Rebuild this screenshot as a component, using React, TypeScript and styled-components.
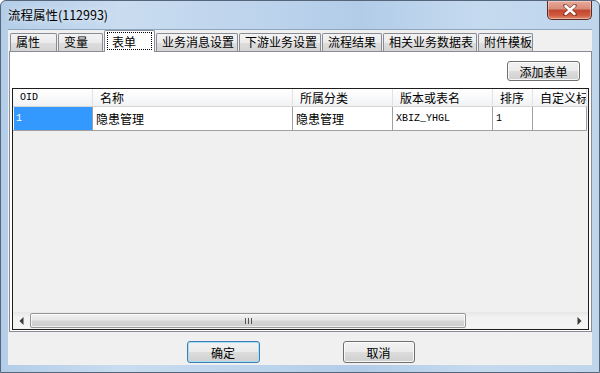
import React from 'react';
import styled, { createGlobalStyle } from 'styled-components';

const Global = createGlobalStyle`
  html, body { margin: 0; padding: 0; }
  body {
    width: 600px; height: 373px; overflow: hidden;
    font-family: "Noto Sans CJK SC", "Liberation Sans", sans-serif;
    font-size: 12px; color: #000;
  }
`;

const Window = styled.div`
  width: 600px; height: 373px; box-sizing: border-box;
  border: 1px solid #55657a;
  border-radius: 6px 6px 0 0;
  background: linear-gradient(90deg, #b3cde8 0%, #c9dcf0 20%, #bcd3ec 45%, #b2cce8 60%, #c5daef 80%, #bed5ec 100%);
  padding: 0 7px 7px 7px;
  display: flex; flex-direction: column;
  overflow: hidden;
`;

const TitleBar = styled.div`
  height: 28px; flex: none;
  display: flex; align-items: flex-start; justify-content: space-between;
`;

const TitleText = styled.div`
  height: 28px; line-height: 28px; font-size: 12.5px; color: #000;
  text-shadow: 0 0 6px rgba(255,255,255,0.9);
`;

const CloseBtn = styled.div`
  width: 45px; height: 19px; box-sizing: border-box;
  border: 1px solid #5b2a22; border-top: none;
  border-radius: 0 0 5px 5px;
  background: linear-gradient(#e9a99a 0%, #d78a78 45%, #c2452f 50%, #cf5b3f 80%, #e08f72 100%);
  box-shadow: inset 0 0 0 1px rgba(255,255,255,0.35);
  display: flex; align-items: center; justify-content: center;
`;

const Client = styled.div`
  flex: 1; background: #f0f0f0;
  display: flex; flex-direction: column;
  padding-left: 1px;
  border-top: 1px solid #8fa6bf;
`;

const TabStrip = styled.div`
  height: 21px; flex: none;
  display: flex; align-items: flex-end;
  padding-left: 1px;
  position: relative; z-index: 1;
`;

const Tab = styled.div<{ $w: number; $active?: boolean }>`
  width: ${p => p.$w}px; box-sizing: border-box;
  height: ${p => (p.$active ? 22 : 18)}px;
  margin-right: 1px;
  margin-bottom: ${p => (p.$active ? -1 : 0)}px;
  border: 1px solid #898c95; border-bottom: none;
  border-radius: 2px 2px 0 0;
  background: ${p => (p.$active ? '#ffffff' : 'linear-gradient(#f3f3f3 0%, #ebebeb 50%, #dedede 51%, #d4d4d4 100%)')};
  padding: ${p => (p.$active ? '1px 2px 2px 2px' : '0 0 0 5px')};
  line-height: 16px; white-space: nowrap; overflow: hidden;
`;

const FocusBox = styled.div`
  height: 100%; box-sizing: border-box;
  border: 1px dotted #000;
  padding-left: 4px; line-height: 17px;
`;

const Panel = styled.div`
  height: 281px; box-sizing: border-box; flex: none;
  border: 1px solid #898c95;
  background: #fff;
  display: flex; flex-direction: column;
  padding: 9px 2px 1px 2px;
`;

const ToolRow = styled.div`
  display: flex; justify-content: flex-end;
  padding-right: 9px; margin-bottom: 7px;
`;

const Button = styled.div<{ $w: number; $h?: number; $default?: boolean }>`
  width: ${p => p.$w}px; height: ${p => p.$h ?? 20}px; box-sizing: border-box;
  border: 1px solid ${p => (p.$default ? '#3c7fb1' : '#707070')};
  border-radius: 3px;
  background: linear-gradient(#f2f2f2 0%, #ebebeb 49%, #dddddd 50%, #cfcfcf 100%);
  box-shadow: inset 0 0 0 1px ${p => (p.$default ? '#a9dcf7' : 'rgba(255,255,255,0.8)')};
  display: flex; align-items: center; justify-content: center;
  font-size: 12px;
`;

const ListView = styled.div`
  flex: 1; box-sizing: border-box;
  border: 1px solid #1e1e1e;
  background: #f0f0f0;
  display: flex; flex-direction: column;
  overflow: hidden;
`;

const HeaderRow = styled.div`
  height: 17px; flex: none; display: flex;
  background: linear-gradient(#ffffff 0%, #f7f8fa 60%, #f1f2f4 100%);
  border-bottom: 1px solid #d5d5d5;
`;

const HeaderCell = styled.div<{ $w: number; $mono?: boolean }>`
  width: ${p => p.$w}px; flex: none; box-sizing: border-box;
  border-right: 1px solid #e3e3e3;
  padding-left: 7px; line-height: 17px; white-space: nowrap; overflow: hidden;
  font-family: ${p => (p.$mono ? '"Liberation Mono", monospace' : 'inherit')};
  font-size: ${p => (p.$mono ? '10px' : '12px')};
`;

const DataRow = styled.div`
  height: 24px; flex: none; display: flex;
`;

const DataCell = styled.div<{ $w: number; $mono?: boolean; $sel?: boolean }>`
  width: ${p => p.$w}px; flex: none; box-sizing: border-box;
  border-right: 1px solid #a0a0a0; border-bottom: 1px solid #a0a0a0;
  background: ${p => (p.$sel ? '#3399ff' : '#fff')};
  color: ${p => (p.$sel ? '#fff' : '#000')};
  padding-left: ${p => (p.$sel ? 2 : 3)}px; line-height: 23px; white-space: nowrap; overflow: hidden;
  font-family: ${p => (p.$mono ? '"Liberation Mono", monospace' : 'inherit')};
  font-size: ${p => (p.$mono ? '10px' : '12px')};
`;

const SelPad = styled.div`
  width: 1px; flex: none; background: #fff; border-bottom: 1px solid #a0a0a0;
`;

const Filler = styled.div`
  flex: 1;
`;

const HScroll = styled.div`
  height: 17px; flex: none; display: flex; align-items: stretch;
  background: linear-gradient(#e6e6e6, #f2f2f2 30%, #f4f4f4);
`;

const ArrowBtn = styled.div`
  width: 17px; flex: none;
  display: flex; align-items: center; justify-content: center;
`;

const Track = styled.div`
  flex: 1; display: flex; align-items: stretch; padding: 1px 0;
`;

const Thumb = styled.div`
  box-sizing: border-box; border: 1px solid #979797; border-radius: 2px;
  background: linear-gradient(#f3f3f3 0%, #e6e6e6 45%, #d6d6d6 55%, #cdcdcd 100%);
  box-shadow: inset 0 0 0 1px rgba(255,255,255,0.7);
  display: flex; align-items: center; justify-content: center;
`;

const Grip = styled.div`
  width: 7px; height: 6px;
  background: repeating-linear-gradient(90deg, #555 0 1px, transparent 1px 3px);
`;

const Footer = styled.div`
  flex: 1; display: flex; justify-content: center; align-items: flex-start;
  gap: 83px; padding-top: 9px;
`;

const tabs = [
  { t: '属性', w: 47 },
  { t: '变量', w: 45 },
  { t: '表单', w: 51, active: true },
  { t: '业务消息设置', w: 82 },
  { t: '下游业务设置', w: 82 },
  { t: '流程结果', w: 60 },
  { t: '相关业务数据表', w: 94 },
  { t: '附件模板', w: 55 },
];

const cols = [
  { h: 'OID', w: 80, mono: true },
  { h: '名称', w: 200 },
  { h: '所属分类', w: 100 },
  { h: '版本或表名', w: 100 },
  { h: '排序', w: 40 },
  { h: '自定义标', w: 54 },
];

const row = [
  { v: '1', mono: true },
  { v: '隐患管理' },
  { v: '隐患管理' },
  { v: 'XBIZ_YHGL', mono: true },
  { v: '1', mono: true },
  { v: '' },
];

export default function App() {
  return (
    <>
      <Global />
      <Window>
        <TitleBar>
          <TitleText>流程属性(112993)</TitleText>
          <CloseBtn>
            <svg width="14" height="12" viewBox="0 0 14 12">
              <path d="M2 1.5 L12 10.5 M12 1.5 L2 10.5" stroke="#5a2218" strokeWidth="4" strokeLinecap="round" fill="none" opacity="0.55" />
              <path d="M2.5 2 L11.5 10 M11.5 2 L2.5 10" stroke="#fff" strokeWidth="2.4" strokeLinecap="round" fill="none" />
            </svg>
          </CloseBtn>
        </TitleBar>
        <Client>
          <TabStrip>
            {tabs.map(tb => (
              <Tab key={tb.t} $w={tb.w} $active={tb.active}>
                {tb.active ? <FocusBox>{tb.t}</FocusBox> : tb.t}
              </Tab>
            ))}
          </TabStrip>
          <Panel>
            <ToolRow>
              <Button $w={73}>添加表单</Button>
            </ToolRow>
            <ListView>
              <HeaderRow>
                {cols.map(c => (
                  <HeaderCell key={c.h} $w={c.w} $mono={c.mono}>{c.h}</HeaderCell>
                ))}
              </HeaderRow>
              <DataRow>
                <SelPad />
                {row.map((c, i) => (
                  <DataCell key={i} $w={i === 0 ? cols[i].w - 1 : cols[i].w} $mono={c.mono} $sel={i === 0}>{c.v}</DataCell>
                ))}
              </DataRow>
              <Filler />
              <HScroll>
                <ArrowBtn>
                  <svg width="5" height="8" viewBox="0 0 5 8"><path d="M4.5 0 L0.5 4 L4.5 8 Z" fill="#3a3a3a" /></svg>
                </ArrowBtn>
                <Track>
                  <Thumb style={{ width: 436 }}><Grip /></Thumb>
                </Track>
                <ArrowBtn>
                  <svg width="5" height="8" viewBox="0 0 5 8"><path d="M0.5 0 L4.5 4 L0.5 8 Z" fill="#3a3a3a" /></svg>
                </ArrowBtn>
              </HScroll>
            </ListView>
          </Panel>
          <Footer>
            <Button $w={73} $h={22} $default>确定</Button>
            <Button $w={72} $h={22}>取消</Button>
          </Footer>
        </Client>
      </Window>
    </>
  );
}
